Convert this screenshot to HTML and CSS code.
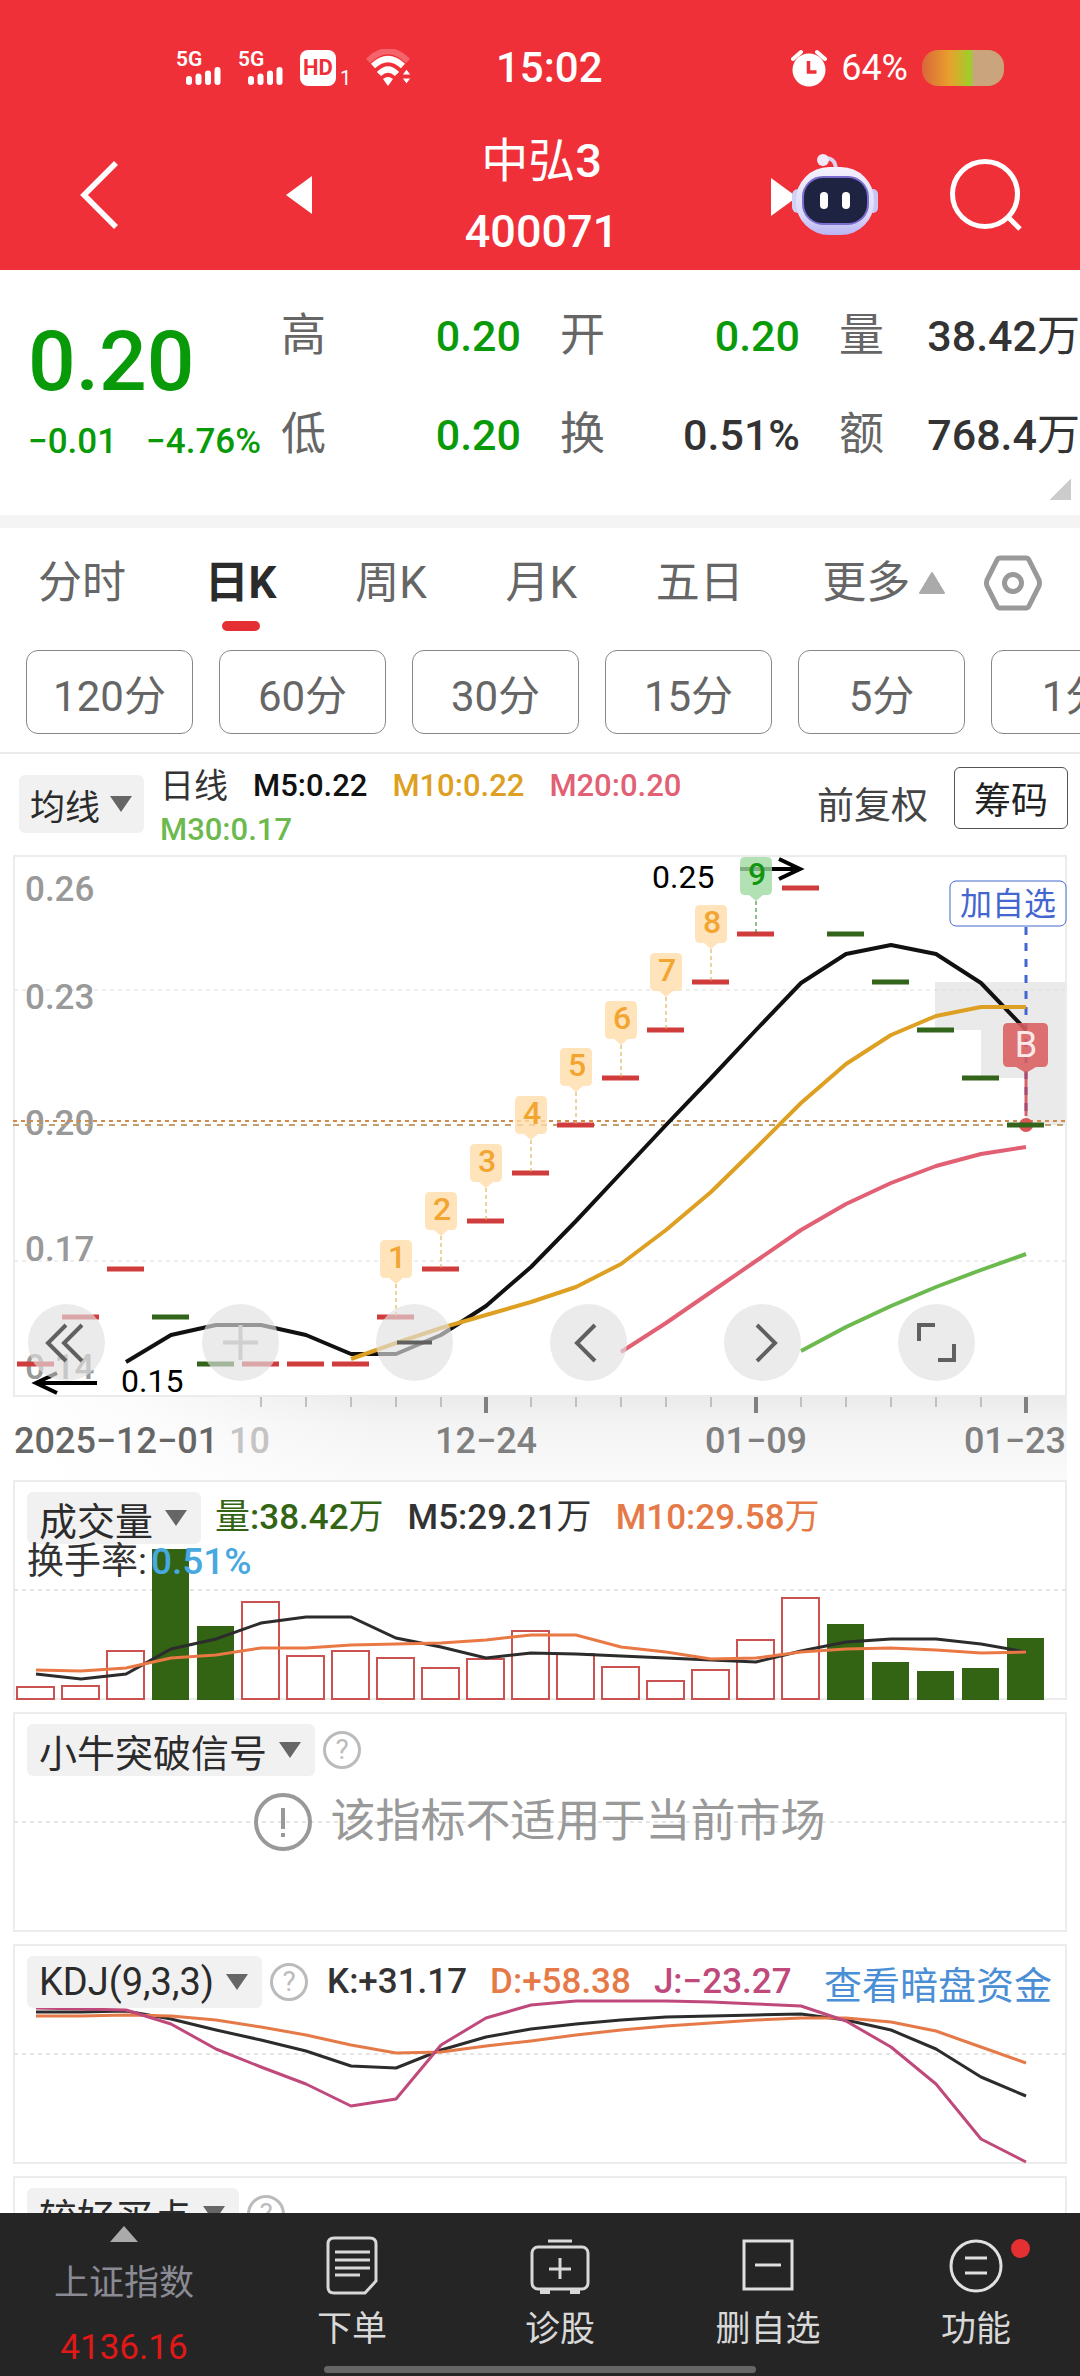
FILE: index.html
```html
<!DOCTYPE html>
<html lang="zh-CN">
<head>
<meta charset="utf-8">
<meta name="viewport" content="width=device-width">
<title>中弘3 400071</title>
<link rel="stylesheet" href="styles.css">
</head>
<body>
<div class="app">
  <header class="top">
    <div class="status">
      <div class="status-left">
        <span class="sig"><b>5G</b><svg width="36" height="18" viewBox="0 0 36 18"><path d="M3 15V12M12.500 15V9.500M22 15V6.500M31.500 15V3" stroke="#fff" stroke-width="6" stroke-linecap="round"/></svg></span>
        <span class="sig"><b>5G</b><svg width="36" height="18" viewBox="0 0 36 18"><path d="M3 15V12M12.500 15V9.500M22 15V6.500M31.500 15V3" stroke="#fff" stroke-width="6" stroke-linecap="round"/></svg></span>
        <span class="hd"><b>HD</b><i>1</i></span>
        <svg width="46" height="38" viewBox="0 0 46 38" fill="none">
          <path d="M2 12Q22 -8 42 12" stroke="#fff" stroke-opacity=".25" stroke-width="6"/>
          <path d="M7 17Q22 3 37 17" stroke="#fff" stroke-width="6"/>
          <path d="M13 25Q22 16 31 25" stroke="#fff" stroke-width="6"/>
          <path d="M22 37l-5-7q5-4 10 0z" fill="#fff"/>
          <path d="M36 26h9l-4.500-6zM36 29h9l-4.500 6z" fill="#fff" stroke="#f03038" stroke-width="1"/>
        </svg>
      </div>
      <div class="clock">15:02</div>
      <div class="status-right">
        <svg width="36" height="38" viewBox="0 0 36 38"><circle cx="18" cy="21" r="16.500" fill="#fff"/><path d="M2 10l8-7M34 10l-8-7" stroke="#fff" stroke-width="4" stroke-linecap="round"/><path d="M17.500 12v11h8" fill="none" stroke="#f03038" stroke-width="3.500"/></svg>
        <span>64%</span>
        <span class="battery"></span>
      </div>
    </div>
    <div class="titlebar">
      <button class="ic back" aria-label="返回"><svg width="44" height="72" viewBox="0 0 44 72"><path d="M38 4L6 36L38 68" fill="none" stroke="#fff" stroke-width="5.500"/></svg></button>
      <button class="ic prev" aria-label="上一只"><svg width="26" height="38" viewBox="0 0 26 38"><path d="M0 19L26 0V38z" fill="#fff"/></svg></button>
      <h1 class="name">中弘<b>3</b><br><b class="code">400071</b></h1>
      <button class="ic next" aria-label="下一只"><svg width="110" height="84" viewBox="0 0 110 84">
        <defs><linearGradient id="rb" x1="0" y1="0" x2="0" y2="1"><stop offset="0" stop-color="#f4f0fc"/><stop offset=".7" stop-color="#dcdaf8"/><stop offset="1" stop-color="#b9b4f2"/></linearGradient></defs>
        <path d="M0 25V63L26 44z" fill="#fff"/>
        <path d="M50 6Q65 2 65 18" fill="none" stroke="#dcd2f0" stroke-width="4"/><circle cx="52" cy="7" r="6" fill="#f1e9fa"/>
        <rect x="21" y="36" width="12" height="24" rx="6" fill="#cfd2f6"/><rect x="96" y="36" width="11" height="24" rx="5" fill="#c9c5f4"/>
        <rect x="25" y="14" width="78" height="68" rx="33" fill="url(#rb)"/>
        <rect x="32" y="24" width="65" height="47" rx="20" fill="#1d2340" stroke="#7b6cd0" stroke-width="2"/>
        <rect x="49" y="39" width="8" height="17" rx="4" fill="#fff"/><rect x="71" y="39" width="8" height="17" rx="4" fill="#fff"/>
      </svg></button>
      <button class="ic find" aria-label="搜索"><svg width="76" height="76" viewBox="0 0 76 76"><circle cx="36" cy="37" r="32.500" fill="none" stroke="#fff" stroke-width="5"/><path d="M59 60L71 72" stroke="#fff" stroke-width="5"/></svg></button>
    </div>
  </header>

  <main class="body">
    <section class="quote">
      <div class="last">
        <div class="price">0.20</div>
        <div class="chg"><span>−0.01</span><span>−4.76%</span></div>
      </div>
      <dl class="stats">
        <div><dt>高</dt><dd class="dn">0.20</dd></div>
        <div><dt>开</dt><dd class="dn">0.20</dd></div>
        <div><dt>量</dt><dd>38.42<span class="u">万</span></dd></div>
        <div><dt>低</dt><dd class="dn">0.20</dd></div>
        <div><dt>换</dt><dd>0.51%</dd></div>
        <div><dt>额</dt><dd>768.4<span class="u">万</span></dd></div>
      </dl>
      <span class="corner"></span>
    </section>

    <nav class="tabs">
      <button>分时</button><button class="on">日K</button><button>周K</button><button>月K</button><button>五日</button>
      <button class="more">更多<svg width="28" height="24" viewBox="0 0 28 24"><path d="M14 2L26 22H2z" fill="#aaa" stroke="#aaa" stroke-width="2" stroke-linejoin="round"/></svg></button>
      <button class="gear" aria-label="设置"><svg width="60" height="58" viewBox="0 0 60 58" fill="none" stroke="#999" stroke-width="5"><path d="M17 4H43Q45 4 46 6L56 26Q57 29 56 32L46 52Q45 54 43 54H17Q15 54 14 52L4 32Q3 29 4 26L14 6Q15 4 17 4Z"/><circle cx="30" cy="29" r="8.500"/></svg></button>
    </nav>
    <div class="periods">
      <button>120分</button><button>60分</button><button>30分</button><button>15分</button><button>5分</button><button>1分</button>
    </div>

    <div class="ma">
      <button class="chip">均线<i></i></button>
      <div class="ma-vals"><span>日线</span><span class="c-k">M5:0.22</span><span class="c-y">M10:0.22</span><span class="c-p">M20:0.20</span><span class="c-g">M30:0.17</span></div>
      <button class="fq">前复权</button>
      <button class="cm">筹码</button>
    </div>

    <section class="plot">
      <svg class="chart" viewBox="0 853 1080 627" fill="none">
        <defs>
          <linearGradient id="sh" x1="0" y1="0" x2="0" y2="1"><stop offset="0" stop-color="#ebebeb"/><stop offset=".35" stop-color="#f4f4f4"/><stop offset="1" stop-color="#fafafa"/></linearGradient>
          <linearGradient id="fade"><stop offset="0" stop-color="#fff"/><stop offset=".12" stop-color="#fff" stop-opacity=".8"/><stop offset=".35" stop-color="#fff" stop-opacity="0"/></linearGradient>
          <path id="flag" d="M-11-77H11Q16-77 16-72V-44Q16-39 11-39H7L0-33L-7-39H-11Q-16-39-16-44V-72Q-16-77-11-77Z"/>
        </defs>
        <rect x="14" y="1397" width="1053" height="83" fill="url(#sh)"/>
        <rect x="13" y="1397" width="1054" height="83" fill="url(#fade)"/>
        <path d="M935 982H1067V1125H1025V1078H981V1030H935Z" fill="#eaeaea"/>
        <path d="M14 990H1066M14 1261H1066" stroke="#dcdcdc" stroke-dasharray="4 4"/>
        <rect x="14" y="856" width="1052" height="540" stroke="#ececec" stroke-width="2"/>
        <g class="axis-y"><text x="25" y="901">0.26</text><text x="25" y="1009">0.23</text><text x="25" y="1135">0.20</text><text x="25" y="1261">0.17</text><text x="25" y="1379">0.14</text></g>
        <path d="M13 1121H1066" stroke="#d08a4c" stroke-width="2" stroke-dasharray="4 4"/>
        <path d="M13 1125H1066" stroke="#bfa071" stroke-width="2" stroke-dasharray="6 6"/>
        <path stroke="#d03b3c" stroke-width="5" d="M17 1364h37M62 1317h37M107 1269h37M242 1364h37M287 1364h37M332 1364h37M377 1317h37M422 1269h37M467 1221h37M512 1173h37M557 1125h37M602 1078h37M647 1030h37M692 982h37M737 934h37M782 888h37"/>
        <path d="M1026 927V1125" stroke="#4467cf" stroke-width="3" stroke-dasharray="8 8"/>
        <circle cx="1026" cy="1125" r="7" fill="#d95757"/>
        <path stroke="#32641a" stroke-width="5" d="M152 1317h37M197 1364h37M827 934h37M872 982h37M917 1030h37M962 1078h37M1007 1125h37"/>
        <path d="M1026 1072V1116" stroke="#d0404a" stroke-width="3" stroke-opacity=".8"/>
        <g stroke-width="4" stroke-linejoin="round">
          <polyline stroke="#111" points="126,1362 171,1335 216,1325 261,1325 306,1335 351,1354 396,1354 441,1335 486,1306 531,1267 576,1221 621,1173 666,1125 711,1078 756,1030 801,983 846,954 891,945 936,954 981,983 1026,1030"/>
          <polyline stroke="#dda022" points="351,1359 396,1343 441,1328 486,1315 531,1302 576,1287 621,1264 666,1230 711,1192 756,1148 801,1103 846,1064 891,1035 936,1016 981,1007 1026,1007"/>
          <polyline stroke="#e26074" points="621,1352 666,1323 711,1292 756,1261 801,1230 846,1204 891,1183 936,1166 981,1154 1026,1147"/>
          <polyline stroke="#6cb94e" points="801,1351 846,1327 891,1306 936,1287 981,1270 1026,1254"/>
        </g>
        <path d="M396 1284V1317M441 1236V1269M486 1188V1221M531 1140V1173M576 1092V1125M621 1045V1078M666 997V1030M711 949V982" stroke="#d9a83e" stroke-dasharray="4 3"/>
        <path d="M756 901V934" stroke="#1c7c1c" stroke-dasharray="4 3"/>
        <path d="M740 869H800M779 859L800 869L779 879" stroke="#000" stroke-width="4"/>
        <g fill="#ffdcaa" fill-opacity=".8">
          <use href="#flag" x="396" y="1317"/><use href="#flag" x="441" y="1269"/><use href="#flag" x="486" y="1221"/><use href="#flag" x="531" y="1173"/><use href="#flag" x="576" y="1125"/><use href="#flag" x="621" y="1078"/><use href="#flag" x="666" y="1030"/><use href="#flag" x="711" y="982"/>
          <use href="#flag" x="756" y="934" fill="#9fd9a0"/>
        </g>
        <g class="flag-no"><text x="397" y="1268">1</text><text x="442" y="1220">2</text><text x="487" y="1172">3</text><text x="532" y="1124">4</text><text x="577" y="1076">5</text><text x="622" y="1029">6</text><text x="667" y="981">7</text><text x="712" y="933">8</text><text class="nine" x="757" y="885">9</text></g>
        <path d="M97 1383H36M57 1373L36 1383L57 1393" stroke="#000" stroke-width="4"/>
        <g class="hilo"><text x="652" y="888">0.25</text><text x="121" y="1392">0.15</text></g>
        <rect x="950" y="881" width="116" height="45" rx="6" fill="#fff" stroke="#4467cf" stroke-width="1"/>
        <text class="addtxt" x="1008" y="915">加自选</text>
        <path d="M1008 1023H1043Q1048 1023 1048 1028V1062Q1048 1067 1043 1067H1036L1026 1073L1016 1067H1008Q1003 1067 1003 1062V1028Q1003 1023 1008 1023Z" fill="#d95f60" fill-opacity=".88"/>
        <text class="btxt" x="1026" y="1057">B</text>
        <path stroke="#c0c0c0" stroke-width="2" d="M261 1397v10M306 1397v10M351 1397v10M396 1397v10M441 1397v10M531 1397v10M576 1397v10M621 1397v10M666 1397v10M711 1397v10M801 1397v10M846 1397v10M891 1397v10M936 1397v10M981 1397v10"/>
        <path stroke="#808080" stroke-width="4" d="M486 1397v16M756 1397v16M1026 1397v16"/>
        <g class="axis-x"><text class="first" x="14" y="1453">2025−12−01</text><text class="ghost" x="229" y="1453">10</text><text x="486" y="1453" text-anchor="middle">12−24</text><text x="756" y="1453" text-anchor="middle">01−09</text><text x="1066" y="1453" text-anchor="end">01−23</text></g>
      </svg>
      <div class="ctrls">
        <button aria-label="最早"><svg viewBox="0 0 77 77"><path d="M38 21L20 39L38 57M54 21L36 39L54 57"/></svg></button>
        <button aria-label="放大" class="dim"><svg viewBox="0 0 77 77"><path d="M21 38.500H56M38.500 21V56"/></svg></button>
        <button aria-label="缩小"><svg viewBox="0 0 77 77"><path d="M21 38.500H56"/></svg></button>
        <button aria-label="左移"><svg viewBox="0 0 77 77"><path d="M45 21L27 39L45 57"/></svg></button>
        <button aria-label="右移"><svg viewBox="0 0 77 77"><path d="M33 21L51 39L33 57"/></svg></button>
        <button aria-label="全屏"><svg viewBox="0 0 77 77"><path d="M21 37V21H37M56 40V56H40"/></svg></button>
      </div>
    </section>

    <section class="panel">
      <svg class="chart" viewBox="0 1480 1080 220" fill="none">
        <rect x="14" y="1481" width="1052" height="218" stroke="#ececec" stroke-width="2"/>
        <path d="M14 1590H1066" stroke="#e4e4e4" stroke-width="2" stroke-dasharray="4 4"/>
        <path fill="#326414" d="M152 1549h37V1700h-37zM197 1626h37V1700h-37zM827 1624h37V1700h-37zM872 1662h37V1700h-37zM917 1671h37V1700h-37zM962 1668h37V1700h-37zM1007 1638h37V1700h-37z"/>
        <path stroke="#cc5252" stroke-width="2" d="M17 1687h37V1699h-37zM62 1686h37V1699h-37zM107 1651h37V1699h-37zM242 1602h37V1699h-37zM287 1656h37V1699h-37zM332 1651h37V1699h-37zM377 1658h37V1699h-37zM422 1668h37V1699h-37zM467 1659h37V1699h-37zM512 1631h37V1699h-37zM557 1654h37V1699h-37zM602 1667h37V1699h-37zM647 1681h37V1699h-37zM692 1670h37V1699h-37zM737 1640h37V1699h-37zM782 1598h37V1699h-37z"/>
        <polyline stroke="#2c2c2c" stroke-width="3" points="36,1674 81,1679 126,1674 171,1649 216,1639 261,1623 306,1617 351,1617 396,1638 441,1647 486,1658 531,1653 576,1654 621,1656 666,1658 711,1660 756,1662 801,1651 846,1642 891,1639 936,1639 981,1644 1026,1652"/>
        <polyline stroke="#ea7845" stroke-width="3" points="36,1670 81,1671 126,1668 171,1658 216,1655 261,1648 306,1648 351,1645 396,1644 441,1643 486,1640 531,1635 576,1635 621,1647 666,1652 711,1659 756,1658 801,1652 846,1649 891,1648 936,1650 981,1653 1026,1652"/>
      </svg>
      <div class="head">
        <button class="chip">成交量<i></i></button>
        <div class="vals vol"><span class="c-dg"><span class="u">量</span>:38.42<span class="u">万</span></span><span>M5:29.21<span class="u">万</span></span><span class="c-o">M10:29.58<span class="u">万</span></span></div>
      </div>
      <div class="turn">换手率:<span>0.51%</span></div>
    </section>

    <section class="panel">
      <svg class="chart" viewBox="0 1712 1080 220" fill="none">
        <rect x="14" y="1713" width="1052" height="218" stroke="#ececec" stroke-width="2"/>
        <path d="M14 1822H1066" stroke="#e4e4e4" stroke-width="2" stroke-dasharray="4 4"/>
      </svg>
      <div class="head"><button class="chip">小牛突破信号<i></i></button><button class="help" aria-label="说明">?</button></div>
      <p class="empty"><svg width="58" height="58" viewBox="0 0 58 58" fill="none" stroke="#999" stroke-width="4"><circle cx="29" cy="29" r="27"/><path d="M29 15V36M29 40V44"/></svg>该指标不适用于当前市场</p>
    </section>

    <section class="panel">
      <svg class="chart" viewBox="0 1944 1080 220" fill="none">
        <rect x="14" y="1945" width="1052" height="218" stroke="#ececec" stroke-width="2"/>
        <path d="M14 2054H1066" stroke="#e4e4e4" stroke-width="2" stroke-dasharray="4 4"/>
        <g stroke-width="3" stroke-linejoin="round">
          <polyline stroke="#2c2c2c" points="36,2012 81,2012 126,2011 171,2019 216,2030 261,2040 306,2051 351,2066 396,2068 441,2050 486,2037 531,2029 576,2024 621,2020 666,2017 711,2016 756,2015 801,2014 846,2020 891,2030 936,2049 981,2077 1026,2096"/>
          <polyline stroke="#e57a48" points="36,2016 81,2016 126,2015 171,2016 216,2020 261,2027 306,2035 351,2045 396,2053 441,2052 486,2046 531,2041 576,2035 621,2030 666,2026 711,2023 756,2020 801,2018 846,2018 891,2022 936,2031 981,2047 1026,2063"/>
          <polyline stroke="#c0497c" points="36,2008 81,2009 126,2010 171,2024 216,2049 261,2067 306,2084 351,2106 396,2099 441,2045 486,2018 531,2005 576,2001 621,2001 666,2001 711,2002 756,2004 801,2006 846,2021 891,2047 936,2084 981,2139 1026,2162"/>
        </g>
      </svg>
      <div class="head"><button class="chip">KDJ(9,3,3)<i></i></button><button class="help" aria-label="说明">?</button>
        <div class="vals kdj"><span>K:+31.17</span><span class="c-o">D:+58.38</span><span class="c-m">J:−23.27</span></div><a class="dark" href="#dark">查看暗盘资金</a></div>
    </section>

    <section class="panel">
      <svg class="chart" viewBox="0 2176 1080 220" fill="none"><rect x="14" y="2177" width="1052" height="218" stroke="#ececec" stroke-width="2"/></svg>
      <div class="head"><button class="chip">较好买点<i></i></button><button class="help" aria-label="说明">?</button></div>
    </section>
  </main>

  <footer class="nav">
    <a class="index" href="#index"><svg width="30" height="16" viewBox="0 0 30 16"><path d="M15 0L29 16H1z" fill="#aaa"/></svg><span>上证指数</span><b>4136.16</b></a>
    <a href="#order"><svg width="60" height="60" viewBox="0 0 60 60" fill="none" stroke="#d8d8d8" stroke-width="3"><path d="M12 3H48Q54 3 54 9V46L43 58H12Q6 58 6 52V9Q6 3 12 3Z"/><path d="M13 17H48M13 25H48M13 33H48M13 40H38"/></svg>下单</a>
    <a href="#diagnose"><svg width="60" height="60" viewBox="0 0 60 60" fill="none" stroke="#d8d8d8" stroke-width="3"><path d="M18 6H42"/><rect x="2" y="12" width="56" height="42" rx="6"/><path d="M30 23V44M19 34H41"/><path d="M10 57H20M40 57H50" stroke-width="4"/></svg>诊股</a>
    <a href="#remove"><svg width="60" height="60" viewBox="0 0 60 60" fill="none" stroke="#e0e0e0" stroke-width="3"><rect x="6" y="6" width="48" height="48"/><path d="M17 30H43"/></svg>删自选</a>
    <a href="#more" class="fn"><svg width="60" height="60" viewBox="0 0 60 60" fill="none" stroke="#e0e0e0" stroke-width="3"><circle cx="30" cy="31" r="25"/><path d="M19 23H41M19 38H41"/></svg>功能<i></i></a>
    <span class="home"></span>
  </footer>
</div>
</body>
</html>
```
FILE: styles.css
```css
* { box-sizing: border-box; }
body { margin: 0; font-family: Roboto, "Noto Sans CJK SC", sans-serif; color: #333; background: #fff; }
button { font: inherit; color: inherit; background: none; border: 0; padding: 0; margin: 0; }
a { color: inherit; text-decoration: none; }
svg { display: block; flex: none; }
i { font-style: normal; }
.u { font-weight: 400; }
.app { height: 100vh; display: flex; flex-direction: column; overflow: hidden; }

/* header */
.top { background: #f03038; color: #fff; height: 270px; flex: none; }
.status { height: 134px; padding: 2px 76px 0 176px; display: grid; grid-template-columns: 320px auto 1fr; align-items: center; }
.status-left { display: flex; align-items: center; gap: 16px; }
.sig { display: flex; flex-direction: column; width: 46px; height: 34px; }
.sig b { font-size: 21px; line-height: 16px; font-weight: 600; }
.sig svg { align-self: flex-end; }
.hd { display: flex; align-items: flex-end; gap: 4px; width: 50px; }
.hd b { background: #fff; color: #f03038; width: 36px; height: 36px; border-radius: 8px; font-size: 22px; line-height: 36px; text-align: center; flex: none; }
.hd i { font-size: 20px; line-height: 16px; }
.clock { font-size: 42px; line-height: 48px; font-weight: 500; }
.status-right { display: flex; align-items: center; justify-content: flex-end; gap: 14px; font-size: 36px; line-height: 40px; }
.battery { width: 82px; height: 36px; border-radius: 16px; background: linear-gradient(90deg, #d9663c 0, #e8a12c 34%, #9ad22c 61%, #c9a47c 62%); }
.titlebar { height: 136px; padding: 0 55px 14px 78px; display: flex; align-items: center; }
.ic { display: block; flex: none; }
.prev { margin-left: 164px; }
.name { flex: 1; margin: 0; padding-top: 2px; font-size: 47px; line-height: 70px; font-weight: 400; text-align: center; }
.name b { font-weight: 500; }
.name .code { font-size: 45px; }
.find { margin-left: 68px; }

/* quote */
.body { flex: 1; min-height: 0; overflow: hidden; }
.quote { position: relative; height: 258px; border-bottom: 13px solid #f4f4f4; display: flex; }
.last { width: 281px; flex: none; padding: 42px 0 0 28px; color: #089a08; font-weight: 500; }
.price { font-size: 84px; line-height: 100px; }
.chg { display: flex; gap: 29px; font-size: 35px; line-height: 44px; padding-top: 8px; white-space: nowrap; }
.stats { flex: 1; margin: 0; padding-top: 16px; display: grid; grid-template-columns: 240px 240px 1fr; grid-auto-rows: 99px; column-gap: 39px; }
.stats div { display: flex; justify-content: space-between; align-items: baseline; height: 99px; line-height: 99px; }
.stats dt { font-size: 45px; color: #666; }
.stats dd { margin: 0; font-size: 43px; font-weight: 500; white-space: nowrap; }
.stats .dn { color: #089a08; }
.corner { position: absolute; right: 9px; bottom: 15px; width: 22px; height: 22px; background: linear-gradient(135deg, transparent 50%, #ccc 50%); }

/* tabs */
.tabs { height: 122px; padding: 0 37px 0 38px; display: flex; justify-content: space-between; align-items: flex-start; font-size: 44px; line-height: 108px; color: #666; }
.tabs button { display: flex; align-items: center; height: 110px; }
.tabs .on { position: relative; font-weight: 700; color: #2b2b2b; }
.tabs .on::after { content: ""; position: absolute; left: 50%; bottom: 7px; width: 38px; margin-left: -19px; height: 10px; border-radius: 5px; background: #e53033; }
.more svg { margin-left: 8px; }
.tabs .gear { margin-left: -42px; }
.periods { height: 104px; padding-left: 26px; display: flex; gap: 26px; overflow: hidden; border-bottom: 2px solid #ebebeb; }
.periods button { width: 167px; height: 84px; flex: none; border: 1px solid #888; border-radius: 12px; font-size: 42px; color: #666; }

/* moving averages */
.ma { height: 99px; padding: 0 12px 0 19px; display: flex; align-items: flex-start; }
.chip { display: flex; align-items: center; background: #f1f1f1; border-radius: 6px; color: #2b2b2b; font-size: 38px; height: 52px; padding: 0 14px 0 12px; gap: 12px; white-space: nowrap; }
.chip i { width: 22px; height: 16px; background: #666; clip-path: polygon(0 0, 100% 0, 50% 100%); }
.ma .chip { font-size: 35px; height: 58px; margin-top: 21px; padding: 0 12px 0 11px; gap: 10px; }
.ma-vals { flex: 1; display: flex; flex-wrap: wrap; column-gap: 25px; padding: 10px 60px 0 16px; font-size: 31px; line-height: 44px; font-weight: 500; }
.ma-vals span:first-child { font-size: 34px; font-weight: 400; }
.fq { font-size: 37px; margin-top: 26px; line-height: 54px; color: #444; }
.cm { width: 114px; height: 62px; margin: 13px 0 0 26px; border: 1px solid #555; border-radius: 6px; font-size: 37px; color: #222; }
.c-k { color: #111; } .c-y { color: #dda022; } .c-p { color: #e26074; } .c-g { color: #6cb94e; }
.c-dg { color: #326414; } .c-o { color: #e57a48; } .c-m { color: #c0497c; }

/* charts */
.plot, .panel { position: relative; }
.panel + .panel { margin-top: 12px; }
.chart { width: 100%; height: auto; }
.axis-y, .axis-x { font-size: 35px; font-weight: 500; fill: #999; }
.axis-x { fill: #808080; font-size: 36px; }
.axis-x .first { fill: #666; }
.axis-x .ghost { fill: #c4c4c4; }
.flag-no { font-size: 32px; font-weight: 500; fill: #f2a531; text-anchor: middle; }
.flag-no .nine { fill: #129612; }
.hilo { font-size: 32px; fill: #000; }
.addtxt { font-size: 32px; fill: #4467cf; text-anchor: middle; }
.btxt { font-size: 36px; fill: #fbe9ea; text-anchor: middle; }
.ctrls { position: absolute; left: 28px; right: 105px; top: 451px; display: flex; justify-content: space-between; }
.ctrls button { width: 77px; height: 77px; border-radius: 50%; background: rgba(225, 225, 225, .65); }
.ctrls path { fill: none; stroke: #606060; stroke-width: 4; }
.ctrls .dim path { stroke: #d0d0d0; }
.head { position: absolute; left: 27px; right: 28px; top: 12px; display: flex; align-items: center; height: 52px; }
.vals { display: flex; font-size: 35px; line-height: 52px; font-weight: 500; white-space: nowrap; }
.vol { margin-left: 14px; gap: 24px; }
.turn { position: absolute; left: 27px; top: 58px; font-size: 37px; line-height: 48px; }
.turn span { margin-left: 4px; color: #48a8e0; font-weight: 500; }
.help { width: 38px; height: 38px; margin-left: 8px; border: 3px solid #bbb; border-radius: 50%; font-size: 28px; line-height: 30px; color: #bbb; flex: none; }
.kdj { margin-left: 19px; gap: 23px; }
.dark { margin-left: auto; font-size: 38px; color: #4a8fd6; white-space: nowrap; }
.empty { position: absolute; left: 0; right: 0; top: 80px; margin: 0; display: flex; justify-content: center; align-items: center; gap: 18px; font-size: 45px; line-height: 60px; color: #999; }

/* bottom bar */
.nav { position: relative; flex: none; height: 163px; background: #252525; color: #d8d8d8; display: grid; grid-template-columns: 248fr 208fr 208fr 208fr 208fr; font-size: 35px; line-height: 48px; }
.nav a { position: relative; display: flex; flex-direction: column; align-items: center; padding-top: 22px; gap: 11px; }
.nav .index { padding-top: 13px; gap: 0; color: #8a8a94; }
.index span { margin-top: 18px; }
.index b { font-weight: 400; color: #e01818; margin-top: 16px; }
.fn i { position: absolute; left: 50%; top: 26px; margin-left: 35px; width: 19px; height: 19px; border-radius: 50%; background: #e53033; }
.home { position: absolute; left: 30%; right: 30%; bottom: 3px; height: 7px; border-radius: 4px; background: #666; }
```
